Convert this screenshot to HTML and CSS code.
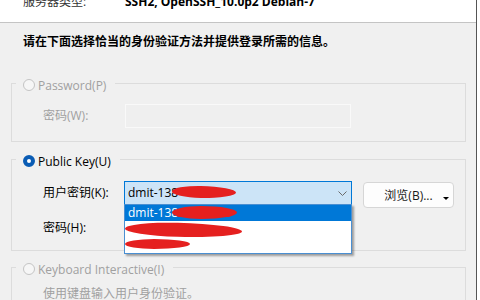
FILE: index.html
```html
<!DOCTYPE html>
<html lang="zh-CN">
<head>
<meta charset="utf-8">
<link rel="stylesheet" href="styles.css">
</head>
<body>
<div class="win">
  <div class="header">
    <span class="hlabel">服务器类型:</span>
    <span class="hvalue">SSH2, OpenSSH_10.0p2 Debian-7</span>
  </div>
  <div class="content">
    <p class="intro">请在下面选择恰当的身份验证方法并提供登录所需的信息。</p>

    <div class="group disabled g1">
      <div class="legend"><span class="radio"></span><span>Password(P)</span></div>
      <div class="row r-pass">
        <span class="label">密码(W):</span>
        <span class="input"></span>
      </div>
    </div>

    <div class="group g2">
      <div class="legend"><span class="radio on"></span><span>Public Key(U)</span></div>
      <div class="row r-key">
        <span class="label">用户密钥(K):</span>
        <div class="combo">
          <span class="ctext">dmit-138</span>
          <span class="redact rc"></span>
          <svg class="chev" width="9" height="5" viewBox="0 0 9 5"><polyline points="0.5,0.5 4.5,4.5 8.5,0.5" fill="none" stroke="#6a6a6a" stroke-width="1"/></svg>
          <div class="list">
            <div class="item sel">dmit-138<span class="redact rs"></span></div>
            <div class="item"><span class="redact r2"></span></div>
            <div class="item"><span class="redact r3"></span></div>
          </div>
        </div>
        <button class="browse">浏览(B)...<span class="caret"></span></button>
      </div>
      <div class="row r-pass2">
        <span class="label">密码(H):</span>
        <span class="input on"></span>
      </div>
    </div>

    <div class="group disabled g3">
      <div class="legend"><span class="radio"></span><span>Keyboard Interactive(I)</span></div>
      <div class="desc">使用键盘输入用户身份验证。</div>
    </div>
  </div>
</div>
</body>
</html>
```

FILE: styles.css
```css
html, body {
  margin: 0;
  padding: 0;
}
body {
  width: 480px;
  height: 300px;
  overflow: hidden;
  background: #ffffff;
  font-family: "Open Sans", "Noto Sans CJK SC", sans-serif;
  font-size: 12px;
  color: #000;
}
.win {
  width: 476px;
  height: 300px;
  border-right: 1px solid #555555;
  background: #f0f0f0;
  overflow: hidden;
}
.header {
  height: 22px;
  background: #ffffff;
  border-bottom: 1px solid #c4c4c4;
  display: flex;
  line-height: 16px;
  overflow: hidden;
}
.header span {
  margin-top: -6px;
}
.hlabel {
  width: 102px;
  padding-left: 23px;
  color: #333333;
}
.hvalue {
  font-weight: bold;
}
.content {
  padding: 11px 0 0 11px;
}
.intro {
  margin: 0;
  padding-left: 12px;
  font-weight: bold;
  line-height: 16px;
}
.group {
  width: 453px;
  border: 1px solid #dcdcdc;
}
.g1 { margin-top: 33px; padding-bottom: 13px; }
.g2 { margin-top: 17px; padding-bottom: 10px; }
.g3 { margin-top: 16px; height: 40px; }
.legend {
  display: flex;
  align-items: center;
  gap: 3px;
  height: 16px;
  margin: -7px 0 0 4px;
  padding: 0 9px 0 7px;
  background: #f0f0f0;
  width: max-content;
}
.disabled .legend, .disabled .label, .desc {
  color: #a0a0a0;
}
.radio {
  display: block;
  width: 12px;
  height: 12px;
  box-sizing: border-box;
  border-radius: 50%;
  border: 1px solid #c4c4c4;
  background: #f6f6f6;
}
.radio.on {
  border: 4px solid #0a5cb4;
  background: #ffffff;
}
.row {
  display: flex;
  align-items: center;
  margin-left: 31px;
}
.label {
  width: 82px;
  line-height: 24px;
}
.input {
  display: block;
  width: 226px;
  height: 24px;
  box-sizing: border-box;
  border: 1px solid #f9f9f9;
  background: #efefef;
}
.input.on {
  background: #ffffff;
  border-color: #d0d0d0;
}
.r-pass { margin-top: 11px; }
.r-key {
  margin-top: 12px;
  align-items: flex-start;
}
.r-pass2 { margin-top: 8px; }
.combo {
  position: relative;
  width: 228px;
  height: 24px;
  margin-left: -1px;
  box-sizing: border-box;
  border: 1px solid #0078d7;
  background: #cce4f7;
  display: flex;
  align-items: center;
  padding-left: 3px;
}
.ctext {
  line-height: 16px;
}
.chev {
  margin-left: auto;
  margin-right: 4px;
}
.redact {
  position: absolute;
  background: #e5201f;
  border-radius: 45% 55% 55% 45% / 50%;
}
.rc { left: 47px; top: 4px; width: 64px; height: 12px; transform: rotate(1deg); }
.list {
  position: absolute;
  left: -1px;
  top: 22px;
  width: 228px;
  box-sizing: border-box;
  border: 1px solid #4a8fd2;
  background: #ffffff;
  box-shadow: 2px 2px 2px rgba(0, 0, 0, 0.35);
  z-index: 2;
}
.item {
  position: relative;
  height: 16px;
  line-height: 16px;
  padding-left: 3px;
}
.item.sel {
  background: #0078d7;
  color: #ffffff;
}
.rs { left: 47px; top: 1px; width: 65px; height: 13px; }
.r2 { left: 0; top: 2px; width: 117px; height: 14px; transform: rotate(1.5deg); }
.r3 { left: 0; top: 2px; width: 65px; height: 10px; }
.browse {
  position: relative;
  margin: 1px 0 0 11px;
  width: 91px;
  height: 26px;
  box-sizing: border-box;
  border: 1px solid #d6d6d6;
  border-radius: 4px;
  background: #fdfdfd;
  font-family: inherit;
  font-size: 12px;
  color: #1a1a1a;
  padding: 0 0 0 0;
  text-align: center;
}
.caret {
  position: absolute;
  right: 4px;
  bottom: 7px;
  width: 0;
  height: 0;
  border-left: 3px solid transparent;
  border-right: 3px solid transparent;
  border-top: 3px solid #000;
}
.desc {
  margin-top: 9px;
  padding-left: 31px;
  line-height: 16px;
}
```
